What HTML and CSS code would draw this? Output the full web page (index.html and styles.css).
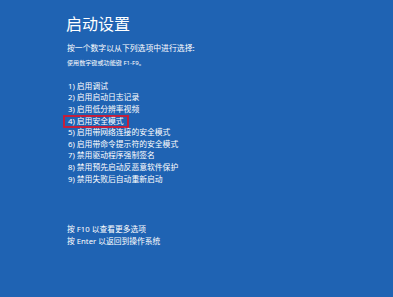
FILE: index.html
```html
<!DOCTYPE html>
<html lang="zh-CN">
<head>
<meta charset="utf-8">
<link rel="stylesheet" href="styles.css">
</head>
<body>
<main class="screen">
  <h1 class="title">启动设置</h1>
  <p class="prompt">按一个数字以从下列选项中进行选择:</p>
  <p class="hint">使用数字键或功能键 F1-F9。</p>
  <ol class="options">
    <li>1) 启用调试</li>
    <li>2) 启用启动日志记录</li>
    <li>3) 启用低分辨率视频</li>
    <li class="selected-row"><span class="selected">4) 启用安全模式</span></li>
    <li>5) 启用带网络连接的安全模式</li>
    <li>6) 启用带命令提示符的安全模式</li>
    <li>7) 禁用驱动程序强制签名</li>
    <li>8) 禁用预先启动反恶意软件保护</li>
    <li>9) 禁用失败后自动重新启动</li>
  </ol>
  <div class="footer">
    <p>按 F10 以查看更多选项</p>
    <p>按 Enter 以返回到操作系统</p>
  </div>
</main>
</body>
</html>
```
FILE: styles.css
```css
html, body {
  margin: 0;
  padding: 0;
  height: 100%;
}
body {
  background: #1f63b3;
  color: #ffffff;
  font-family: "Noto Sans", "Noto Sans CJK SC", sans-serif;
}
.screen {
  padding: 13px 0 0 66px;
  display: flex;
  flex-direction: column;
  align-items: flex-start;
}
.title {
  margin: 0;
  font-family: "Noto Sans CJK SC", sans-serif;
  font-weight: 400;
  font-size: 16px;
  line-height: 20px;
}
.prompt {
  margin: 9px 0 0 1px;
  font-size: 7.85px;
  line-height: 12px;
}
.hint {
  margin: 4px 0 0 1px;
  font-size: 6.1px;
  line-height: 10px;
}
.options {
  list-style: none;
  margin: 12.9px 0 0 2px;
  padding: 0;
  font-size: 7.8px;
  line-height: 11.6px;
}
.selected-row {
  height: 11.6px;
  display: flex;
  align-items: center;
}
.selected {
  box-sizing: border-box;
  display: flex;
  align-items: center;
  height: 13px;
  margin-left: -5px;
  padding: 0 3px 0 3px;
  border: 2px solid #c21f3c;
}
.footer {
  margin: 37.5px 0 0 1px;
  font-size: 7.75px;
  line-height: 12.6px;
}
.footer p {
  margin: 0;
}
```
